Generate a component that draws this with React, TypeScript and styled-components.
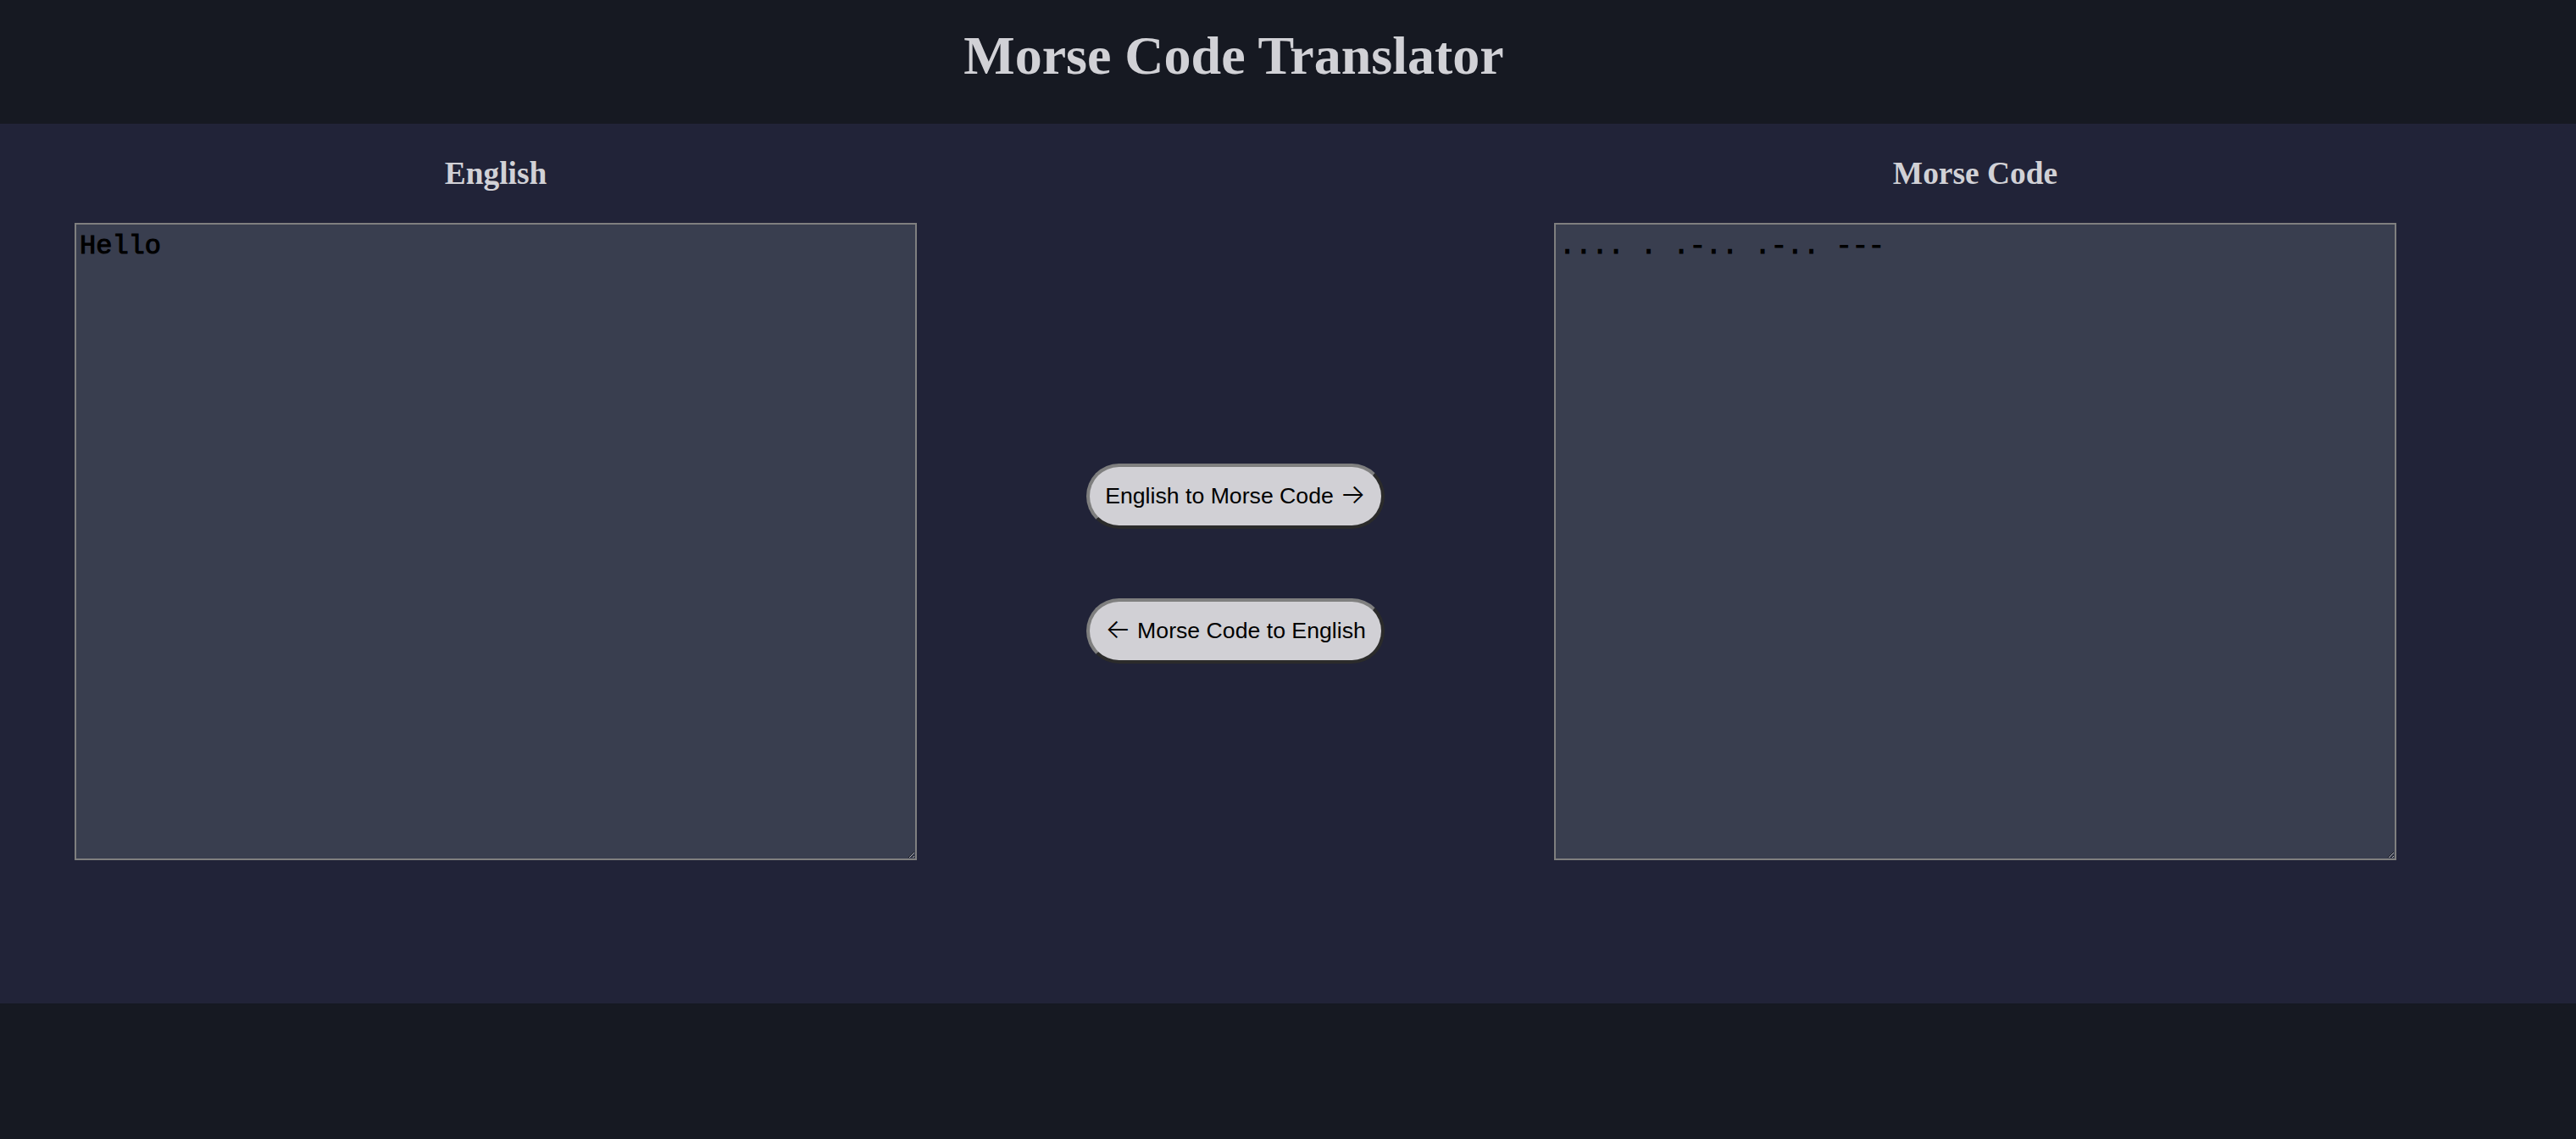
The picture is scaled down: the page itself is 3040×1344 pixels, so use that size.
import { useState } from "react";
import styled, { createGlobalStyle } from "styled-components";

const MORSE: Record<string, string> = {
  a: ".-", b: "-...", c: "-.-.", d: "-..", e: ".", f: "..-.", g: "--.",
  h: "....", i: "..", j: ".---", k: "-.-", l: ".-..", m: "--", n: "-.",
  o: "---", p: ".--.", q: "--.-", r: ".-.", s: "...", t: "-", u: "..-",
  v: "...-", w: ".--", x: "-..-", y: "-.--", z: "--..",
  "0": "-----", "1": ".----", "2": "..---", "3": "...--", "4": "....-",
  "5": ".....", "6": "-....", "7": "--...", "8": "---..", "9": "----.",
};

const GlobalStyle = createGlobalStyle`
  html,
  body {
    margin: 0;
    background: #161922;
  }
`;

const Header = styled.header`
  background: #161922;
  padding: 29px 128px 43px 0;
  h1 {
    margin: 0;
    text-align: center;
    font-family: "Liberation Serif", "Times New Roman", serif;
    font-size: 64px;
    font-weight: 700;
    line-height: normal;
    color: #d1d1d6;
  }
`;

const Main = styled.main`
  background: #212338;
`;

const Row = styled.div`
  display: flex;
  min-height: 1038px;
  padding: 0 212px 0 88px;
`;

const Panel = styled.section`
  width: 994px;
  align-self: flex-start;
  h3 {
    margin: 37px 0;
    text-align: center;
    font-family: "Liberation Serif", "Times New Roman", serif;
    font-size: 37.44px;
    font-weight: 700;
    color: #d1d1d6;
  }
`;

const Area = styled.textarea`
  display: block;
  box-sizing: border-box;
  width: 994px;
  height: 752px;
  margin: 0;
  padding: 7px 4px 4px;
  border: 2px solid #7f7f7f;
  background: #393e4f;
  color: #000;
  font-family: "Liberation Mono", "Courier New", monospace;
  font-size: 32px;
  line-height: normal;
  -webkit-text-stroke: 1.1px #000;
  outline: none;
`;

const Controls = styled.div`
  flex: 1;
  display: flex;
  flex-direction: column;
  align-items: center;
  justify-content: center;
  gap: 82px;
`;

const Button = styled.button`
  padding: 19px 18px;
  border: 4px solid;
  border-color: #7f7f7f #2b2b2b #2b2b2b #7f7f7f;
  border-radius: 60px;
  background: #d1d0d5;
  color: #000;
  font-family: "Liberation Sans", Arial, sans-serif;
  font-size: 26.67px;
  line-height: normal;
  white-space: nowrap;
  cursor: pointer;
`;

const Arrow = styled.span`
  font-family: Inter, "Liberation Sans", sans-serif;
  font-size: 32px;
  font-weight: 300;
  line-height: 0;
`;

const toMorse = (text: string) =>
  text
    .toLowerCase()
    .split(" ")
    .map((word) => word.split("").map((ch) => MORSE[ch] ?? "").filter(Boolean).join(" "))
    .join(" / ");

const toEnglish = (code: string) => {
  const reverse = Object.fromEntries(Object.entries(MORSE).map(([k, v]) => [v, k]));
  return code
    .trim()
    .split(" / ")
    .map((word) => word.split(" ").map((c) => reverse[c] ?? "").join(""))
    .join(" ");
};

const App = () => {
  const [english, setEnglish] = useState("Hello");
  const [morse, setMorse] = useState(".... . .-.. .-.. ---");

  return (
    <>
      <GlobalStyle />
      <Header>
        <h1>Morse Code Translator</h1>
      </Header>
      <Main>
        <Row>
          <Panel>
            <h3>English</h3>
            <Area value={english} onChange={(e) => setEnglish(e.target.value)} />
          </Panel>
          <Controls>
            <Button onClick={() => setMorse(toMorse(english))}>
              English to Morse Code <Arrow>→</Arrow>
            </Button>
            <Button onClick={() => setEnglish(toEnglish(morse))}>
              <Arrow>←</Arrow> Morse Code to English
            </Button>
          </Controls>
          <Panel>
            <h3>Morse Code</h3>
            <Area value={morse} onChange={(e) => setMorse(e.target.value)} />
          </Panel>
        </Row>
      </Main>
    </>
  );
};

export default App;
